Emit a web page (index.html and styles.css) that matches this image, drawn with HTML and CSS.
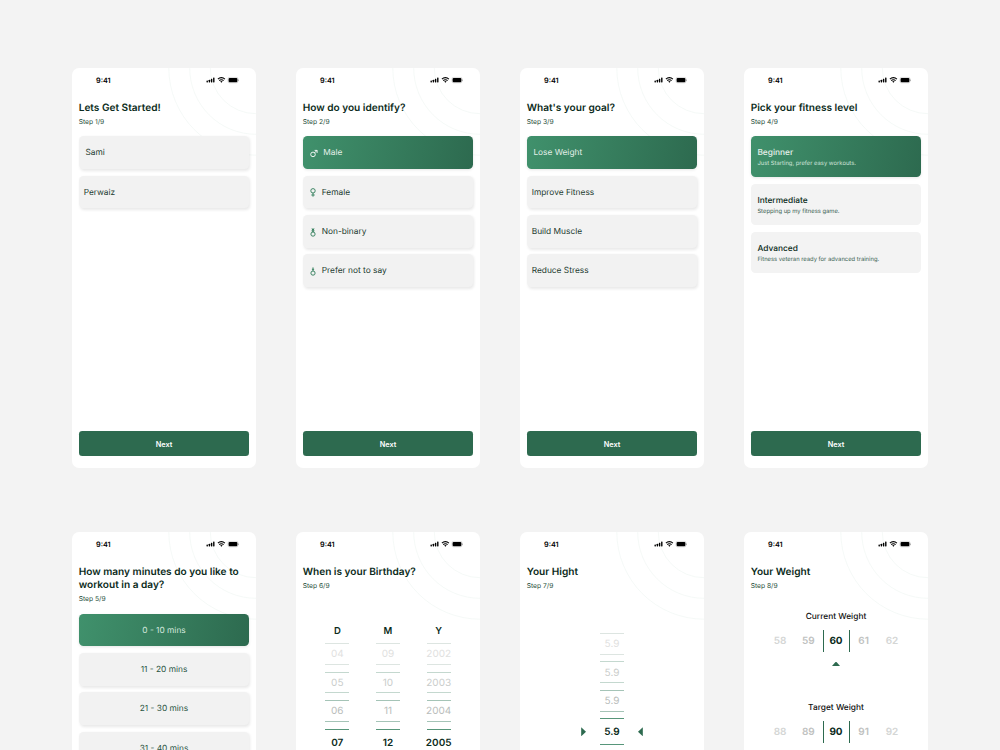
FILE: index.html
```
<!DOCTYPE html>
<html lang="en">
<head>
  <meta charset="UTF-8">
  <meta name="viewport" content="width=device-width, initial-scale=1.0">
  <title>Fitness Onboarding</title>
  <link rel="stylesheet" href="styles.css">
</head>
<body>
  <!-- Shared icons -->
  <svg class="sprite" width="0" height="0">
    <symbol id="status" viewBox="0 0 34 8">
      <rect x="0.5" y="4.6" width="1.4" height="1.9" rx="0.4"/>
      <rect x="2.7" y="3.8" width="1.4" height="2.7" rx="0.4"/>
      <rect x="4.9" y="2.7" width="1.4" height="3.8" rx="0.4"/>
      <rect x="7.1" y="1.5" width="1.4" height="5" rx="0.4"/>
      <path d="M11.9 3.1a5 5 0 0 1 7 0M13.2 4.6a3.1 3.1 0 0 1 4.4 0" fill="none" stroke="#000" stroke-width="1.1"/>
      <path d="M14.2 5.5a1.8 1.8 0 0 1 2.4 0L15.4 6.8z"/>
      <rect x="22" y="1.4" width="10" height="5.4" rx="1.5" fill="none" stroke="#000" stroke-opacity="0.35" stroke-width="0.4"/>
      <rect x="22.6" y="2" width="8.8" height="4.2" rx="1"/>
      <rect x="32.4" y="3.4" width="0.6" height="1.5" rx="0.3" opacity="0.5"/>
    </symbol>
    <symbol id="male" viewBox="0 0 8 9">
      <circle cx="3" cy="5.4" r="2.3"/>
      <path d="M4.6 3.8L6.9 1.5M4.6 1.4h2.5v2.5"/>
    </symbol>
    <symbol id="female" viewBox="0 0 8 9">
      <circle cx="4" cy="2.8" r="2.2"/>
      <path d="M4 5v3.7M2.3 7h3.4"/>
    </symbol>
    <symbol id="nonbinary" viewBox="0 0 8 9">
      <circle cx="4" cy="6.1" r="2.1"/>
      <path d="M4 4V0.4M2.7 0.8l2.6 1.7M5.3 0.8l-2.6 1.7M2.8 3.1h2.4"/>
    </symbol>
    <symbol id="other" viewBox="0 0 8 9">
      <circle cx="4" cy="6.1" r="2.1"/>
      <path d="M4 4V0.4M2.9 2.3h2.2"/>
    </symbol>
    <symbol id="rings" viewBox="0 0 88 88">
      <circle cx="88" cy="0" r="45.7"/>
      <circle cx="88" cy="0" r="66.3"/>
      <circle cx="88" cy="0" r="87.2"/>
    </symbol>
  </svg>

  <div class="board">
    <!-- Step 1 -->
    <div class="phone">
      <svg class="rings"><use href="#rings"/></svg>
      <div class="status"><span>9:41</span><svg><use href="#status"/></svg></div>
      <h2>Lets Get Started!</h2>
      <p class="step">Step 1/9</p>
      <div class="options">
        <div class="option first">Sami</div>
        <div class="option">Perwaiz</div>
      </div>
      <button class="next">Next</button>
    </div>

    <!-- Step 2 -->
    <div class="phone">
      <svg class="rings"><use href="#rings"/></svg>
      <div class="status"><span>9:41</span><svg><use href="#status"/></svg></div>
      <h2>How do you identify?</h2>
      <p class="step">Step 2/9</p>
      <div class="options icons">
        <div class="option active"><svg><use href="#male"/></svg>Male</div>
        <div class="option"><svg><use href="#female"/></svg>Female</div>
        <div class="option"><svg><use href="#nonbinary"/></svg>Non-binary</div>
        <div class="option"><svg><use href="#other"/></svg>Prefer not to say</div>
      </div>
      <button class="next">Next</button>
    </div>

    <!-- Step 3 -->
    <div class="phone">
      <svg class="rings"><use href="#rings"/></svg>
      <div class="status"><span>9:41</span><svg><use href="#status"/></svg></div>
      <h2>What's your goal?</h2>
      <p class="step">Step 3/9</p>
      <div class="options">
        <div class="option active">Lose Weight</div>
        <div class="option">Improve Fitness</div>
        <div class="option">Build Muscle</div>
        <div class="option">Reduce Stress</div>
      </div>
      <button class="next">Next</button>
    </div>

    <!-- Step 4 -->
    <div class="phone">
      <svg class="rings"><use href="#rings"/></svg>
      <div class="status"><span>9:41</span><svg><use href="#status"/></svg></div>
      <h2>Pick your fitness level</h2>
      <p class="step">Step 4/9</p>
      <div class="levels">
        <div class="level active"><h3>Beginner</h3><p>Just Starting, prefer easy workouts.</p></div>
        <div class="level"><h3>Intermediate</h3><p>Stepping up my fitness game.</p></div>
        <div class="level"><h3>Advanced</h3><p>Fitness veteran ready for advanced training.</p></div>
      </div>
      <button class="next">Next</button>
    </div>

    <!-- Step 5 -->
    <div class="phone">
      <svg class="rings"><use href="#rings"/></svg>
      <div class="status"><span>9:41</span><svg><use href="#status"/></svg></div>
      <h2>How many minutes do you like to<br>workout in a day?</h2>
      <p class="step">Step 5/9</p>
      <div class="options minutes">
        <div class="option active">0 - 10 mins</div>
        <div class="option">11 - 20 mins</div>
        <div class="option">21 - 30 mins</div>
        <div class="option">31 - 40 mins</div>
      </div>
    </div>

    <!-- Step 6 -->
    <div class="phone">
      <svg class="rings"><use href="#rings"/></svg>
      <div class="status"><span>9:41</span><svg><use href="#status"/></svg></div>
      <h2>When is your Birthday?</h2>
      <p class="step">Step 6/9</p>
      <div class="date">
        <div class="wheel">
          <h4>D</h4>
          <div class="cell far">04</div>
          <div class="cell mid">05</div>
          <div class="cell near">06</div>
          <div class="cell current">07</div>
        </div>
        <div class="wheel">
          <h4>M</h4>
          <div class="cell far">09</div>
          <div class="cell mid">10</div>
          <div class="cell near">11</div>
          <div class="cell current">12</div>
        </div>
        <div class="wheel">
          <h4>Y</h4>
          <div class="cell far">2002</div>
          <div class="cell mid">2003</div>
          <div class="cell near">2004</div>
          <div class="cell current">2005</div>
        </div>
      </div>
    </div>

    <!-- Step 7 -->
    <div class="phone">
      <svg class="rings"><use href="#rings"/></svg>
      <div class="status"><span>9:41</span><svg><use href="#status"/></svg></div>
      <h2>Your Hight</h2>
      <p class="step">Step 7/9</p>
      <div class="height">
        <span class="arrow right"></span>
        <div class="wheel">
          <div class="cell far">5.9</div>
          <div class="cell mid">5.9</div>
          <div class="cell near">5.9</div>
          <div class="cell current">5.9</div>
        </div>
        <span class="arrow left"></span>
      </div>
    </div>

    <!-- Step 8 -->
    <div class="phone">
      <svg class="rings"><use href="#rings"/></svg>
      <div class="status"><span>9:41</span><svg><use href="#status"/></svg></div>
      <h2>Your Weight</h2>
      <p class="step">Step 8/9</p>
      <div class="weight">
        <h5>Current Weight</h5>
        <div class="scale">
          <span class="edge">58</span><span>59</span><b>60</b><span>61</span><span class="edge">62</span>
        </div>
        <span class="arrow up"></span>
      </div>
      <div class="weight">
        <h5>Target Weight</h5>
        <div class="scale">
          <span class="edge">88</span><span>89</span><b>90</b><span>91</span><span class="edge">92</span>
        </div>
      </div>
    </div>
  </div>
</body>
</html>
```
FILE: styles.css
```
* {
  box-sizing: border-box;
  margin: 0;
  padding: 0;
}
body {
  height: 750px;
  overflow: hidden;
  background-color: #f3f3f3;
  color: #0b2b20;
  font-family: Inter, "Liberation Sans", sans-serif;
  text-rendering: geometricPrecision;
}
.sprite {
  position: absolute;
}
.board {
  display: grid;
  grid-template-columns: repeat(4, 184px);
  grid-template-rows: 400px 218px;
  gap: 64px 40px;
  height: 750px;
  padding: 68px 72px 0;
  overflow: hidden;
}
.phone {
  position: relative;
  display: flex;
  flex-direction: column;
  padding: 6px 6.7px 11.7px;
  background-color: #fff;
  border-radius: 7px;
  overflow: hidden;
}
.phone:nth-child(n+5) {
  border-radius: 7px 7px 0 0;
}
.phone > * {
  position: relative;
  flex-shrink: 0;
}
.phone > .rings {
  position: absolute;
  top: 0;
  right: 0;
  width: 88px;
  height: 88px;
  fill: none;
  stroke: #eef5f2;
  stroke-width: 0.6;
}
.status {
  display: flex;
  justify-content: space-between;
  align-items: center;
  height: 12px;
  padding: 0 9.3px 0 17.3px;
  color: #000;
  font-size: 7.3px;
  font-weight: 600;
}
.status svg {
  width: 34px;
  height: 8px;
}
h2 {
  margin-top: 15.6px;
  font-size: 10.1px;
  font-weight: 600;
  line-height: 13.4px;
  white-space: nowrap;
}
.step {
  margin-top: 2.6px;
  color: #1f4f3b;
  font-size: 6.7px;
  line-height: 9px;
}

/* Option lists */
.options {
  display: flex;
  flex-direction: column;
  gap: 6.7px;
  margin-top: 9.7px;
}
.option {
  display: flex;
  align-items: center;
  height: 32.7px;
  padding: 1.4px 0 0 5px;
  background-color: #f2f2f2;
  border-radius: 4.5px;
  box-shadow: 1px 1.3px 3px rgba(0, 0, 0, 0.09);
  color: #1c3a2f;
  font-size: 8.35px;
}
.option.first,
.option.active {
  padding-left: 6.7px;
}
.option.active,
.level.active {
  background: linear-gradient(100deg, #40916c, #2d6a4f);
  box-shadow: 0 1px 3px rgba(0, 0, 0, 0.1);
  color: #e3efe9;
}
.option svg {
  width: 8px;
  height: 9px;
  margin-right: 5px;
  fill: none;
  stroke: #2d7a57;
  stroke-width: 0.9;
}
.icons .option {
  padding-left: 6px;
}
.icons .option.active {
  padding-left: 7.6px;
}
.option.active svg {
  margin-right: 5px;
  stroke: #fff;
}
.minutes .option {
  justify-content: center;
  padding-left: 0;
  color: #2a5442;
}
.minutes .option.active {
  color: #d5e8df;
}
.next {
  height: 25px;
  margin-top: auto;
  padding-top: 1px;
  background-color: #2d6a4f;
  border: none;
  border-radius: 3.3px;
  color: #fff;
  font-family: inherit;
  font-size: 7.3px;
  font-weight: 600;
}

/* Fitness levels */
.levels {
  display: flex;
  flex-direction: column;
  gap: 6.7px;
  margin-top: 9.7px;
}
.level {
  height: 41px;
  padding: 12px 6.7px 0;
  background-color: #f3f3f3;
  border-radius: 4.5px;
}
.level h3 {
  font-size: 8.35px;
  font-weight: 500;
  line-height: 11px;
}
.level p {
  color: #3c6353;
  font-size: 5.85px;
  line-height: 9px;
}
.level.active p {
  color: #cfe3d9;
}

/* Birthday and height pickers */
.date {
  display: flex;
  justify-content: center;
  gap: 26.7px;
  margin-top: 34.8px;
}
.wheel {
  display: flex;
  flex-direction: column;
  gap: 6.7px;
  width: 24px;
}
.wheel h4 {
  height: 11px;
  font-size: 9.5px;
  font-weight: 600;
  line-height: 13px;
  text-align: center;
}
.cell {
  display: flex;
  justify-content: center;
  align-items: center;
  height: 21.8px;
  padding-top: 1px;
  border: solid #a5c4b7;
  border-width: 1px 0;
  color: #b9bdbb;
  font-size: 10px;
}
.cell.far {
  border-color: #dde5e1;
  color: #dfe1e0;
}
.cell.mid {
  border-color: #c4d8cf;
  color: #cacdcb;
}
.cell.current {
  height: 27px;
  border-color: #57967a;
  color: #0b2b20;
  font-weight: 600;
}
.height {
  display: flex;
  justify-content: center;
  align-items: flex-end;
  gap: 14px;
  margin-top: 42.3px;
}
.arrow {
  background-color: #2d6a4f;
}
.arrow.right,
.arrow.left {
  width: 4.8px;
  height: 9px;
  margin-bottom: 9px;
}
.arrow.right {
  clip-path: polygon(0 0, 100% 50%, 0 100%);
}
.arrow.left {
  clip-path: polygon(100% 0, 0 50%, 100% 100%);
}
.arrow.up {
  width: 9px;
  height: 4.8px;
  margin-top: 10px;
  clip-path: polygon(50% 0, 100% 100%, 0 100%);
}

/* Weight scales */
.weight {
  display: flex;
  flex-direction: column;
  align-items: center;
  height: 91.3px;
  margin-top: 21.4px;
}
.weight + .weight {
  height: 41px;
  margin-top: 0;
}
.weight h5 {
  color: #111;
  font-size: 8.35px;
  font-weight: 500;
  line-height: 11px;
}
.scale {
  display: flex;
  align-items: center;
  height: 22px;
  margin-top: 6.6px;
  color: #bfc2c1;
  font-size: 10px;
  font-weight: 600;
  text-align: center;
}
.scale span {
  width: 28.3px;
}
.scale .edge {
  color: #d4d6d5;
}
.scale b {
  width: 27px;
  border: solid #2d6a4f;
  border-width: 0 1px;
  color: #0b2b20;
  font-weight: 700;
  line-height: 22px;
}
```
